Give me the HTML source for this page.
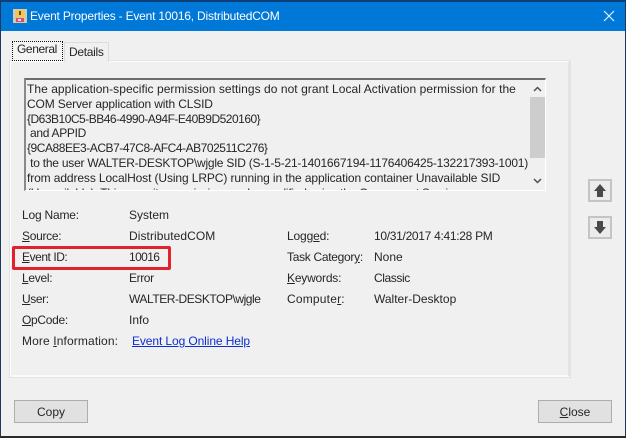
<!DOCTYPE html>
<html>
<head>
<meta charset="utf-8">
<style>
html,body{margin:0;padding:0;}
body{width:626px;height:438px;position:relative;overflow:hidden;background:#f0f0f0;font-family:"Liberation Sans",sans-serif;font-size:12px;color:#262626;}
.a{position:absolute;white-space:pre;line-height:15px;}
.b{position:absolute;box-sizing:border-box;}
u{text-decoration:underline;}
.btn{position:absolute;box-sizing:border-box;background:#e1e1e1;border:1px solid #adadad;text-align:center;line-height:22px;}
.s{background:#ececec;border:2px solid #c4c4c4;}
</style>
</head>
<body>
<div class="b" style="left:0;top:0;width:626px;height:31px;background:#0078d7;border-top:2px solid #0a3f78;"></div>
<div class="b" style="left:0;top:0;width:1px;height:438px;background:#1c3a5c;"></div>
<div class="b" style="left:625px;top:0;width:1px;height:438px;background:#1c3a5c;"></div>
<div class="b" style="left:0;top:436px;width:626px;height:2px;background:#2a2a2a;"></div>

<svg class="b" style="left:12px;top:8px;" width="16" height="16" viewBox="0 0 16 16">
<rect x="1" y="1" width="14" height="14" fill="#d8c9a8"/>
<rect x="4" y="2" width="8" height="7" fill="#f2c94c"/>
<rect x="7" y="3" width="2" height="4" fill="#7a3b1e"/>
<rect x="4" y="10" width="8" height="4" fill="#d8506a"/>
<rect x="6" y="11" width="3" height="2" fill="#f3e8e8"/>
</svg>
<div class="a" style="left:30px;top:9px;color:#fff;font-size:12px;letter-spacing:-.2px;">Event Properties - Event 10016, DistributedCOM</div>
<svg class="b" style="left:603px;top:10px;" width="12" height="12" viewBox="0 0 12 12"><path d="M1 1L11 11M11 1L1 11" stroke="#e8f2fb" stroke-width="1.2" fill="none"/></svg>

<!-- tab panel -->
<div class="b" style="left:10px;top:61px;width:560px;height:316px;border:1px solid #fff;border-right:2px solid #e4e4e4;border-bottom:2px solid #fafafa;box-shadow:0 0 0 1px #e2e2e2;"></div>
<div class="b" style="left:64px;top:42px;width:45px;height:20px;background:#f0f0f0;border:1px solid #dcdcdc;border-bottom:none;"></div>
<div class="a" style="left:69px;top:45px;letter-spacing:-.3px;">Details</div>
<div class="b" style="left:12px;top:41px;width:51px;height:20px;background:#f4f4f4;border:1px dotted #111;"></div>
<div class="a" style="left:17px;top:42px;letter-spacing:-.4px;">General</div>

<!-- text box -->
<div class="b" style="left:24px;top:78px;width:522px;height:113px;overflow:hidden;background:#f0f0f0;border-top:2px solid #6d6d6d;border-left:2px solid #8a8a8a;border-right:1px solid #fff;border-bottom:1px solid #fff;">
<div class="a" style="left:1px;top:2px;letter-spacing:.05px;">The application-specific permission settings do not grant Local Activation permission for the</div>
<div class="a" style="left:1px;top:17px;letter-spacing:-.15px;">COM Server application with CLSID</div>
<div class="a" style="left:1px;top:32px;letter-spacing:-.5px;">{D63B10C5-BB46-4990-A94F-E40B9D520160}</div>
<div class="a" style="left:1px;top:46px;letter-spacing:-.3px;"> and APPID</div>
<div class="a" style="left:1px;top:61px;letter-spacing:-.46px;">{9CA88EE3-ACB7-47C8-AFC4-AB702511C276}</div>
<div class="a" style="left:1px;top:76px;letter-spacing:-.23px;"> to the user WALTER-DESKTOP\wjgle SID (S-1-5-21-1401667194-1176406425-132217393-1001)</div>
<div class="a" style="left:1px;top:91px;letter-spacing:-.11px;">from address LocalHost (Using LRPC) running in the application container Unavailable SID</div>
<div class="a" style="left:1px;top:106px;letter-spacing:-.26px;">(Unavailable). This security permission can be modified using the Component Services</div>
<div class="b" style="left:504px;top:0;width:16px;height:112px;background:#f0f0f0;"></div>
<div class="b" style="left:504px;top:17px;width:15px;height:61px;background:#cdcdcd;"></div>
<svg class="b" style="left:507px;top:6px;" width="9" height="6" viewBox="0 0 9 6"><path d="M1 5L4.5 1.5L8 5" stroke="#505050" stroke-width="1.5" fill="none"/></svg>
<svg class="b" style="left:507px;top:98px;" width="9" height="6" viewBox="0 0 9 6"><path d="M1 1L4.5 4.5L8 1" stroke="#505050" stroke-width="1.5" fill="none"/></svg>
</div>

<!-- fields -->
<div class="a" style="left:22px;top:208px;letter-spacing:-.2px;">Log Name:</div><div class="a" style="left:129px;top:208px;">System</div>
<div class="a" style="left:22px;top:229px;letter-spacing:-.3px;"><u>S</u>ource:</div><div class="a" style="left:129px;top:229px;letter-spacing:.07px;">DistributedCOM</div>
<div class="a" style="left:22px;top:250px;letter-spacing:-.45px;"><u>E</u>vent ID:</div><div class="a" style="left:129px;top:250px;letter-spacing:-.6px;">10016</div>
<div class="a" style="left:22px;top:271px;letter-spacing:-.3px;"><u>L</u>evel:</div><div class="a" style="left:129px;top:271px;letter-spacing:-.4px;">Error</div>
<div class="a" style="left:22px;top:292px;letter-spacing:-.4px;"><u>U</u>ser:</div><div class="a" style="left:129px;top:292px;letter-spacing:-.45px;">WALTER-DESKTOP\wjgle</div>
<div class="a" style="left:22px;top:313px;letter-spacing:-.3px;"><u>O</u>pCode:</div><div class="a" style="left:129px;top:313px;">Info</div>
<div class="a" style="left:22px;top:334px;letter-spacing:.12px;">More <u>I</u>nformation:</div><div class="a" style="left:132px;top:334px;color:#0b2fd0;text-decoration:underline;letter-spacing:-.1px;">Event Log Online Help</div>

<div class="a" style="left:287px;top:229px;letter-spacing:-.15px;">Logg<u>e</u>d:</div><div class="a" style="left:374px;top:229px;letter-spacing:-.3px;">10/31/2017 4:41:28 PM</div>
<div class="a" style="left:287px;top:250px;letter-spacing:-.3px;">Task Categor<u>y</u>:</div><div class="a" style="left:374px;top:250px;">None</div>
<div class="a" style="left:287px;top:271px;letter-spacing:-.2px;"><u>K</u>eywords:</div><div class="a" style="left:374px;top:271px;letter-spacing:-.4px;">Classic</div>
<div class="a" style="left:287px;top:292px;letter-spacing:.2px;">Compute<u>r</u>:</div><div class="a" style="left:374px;top:292px;">Walter-Desktop</div>

<!-- red highlight -->
<div class="b" style="left:12px;top:246px;width:159px;height:24px;border:3px solid #e0222f;border-radius:2px;"></div>

<!-- side buttons -->
<div class="b s" style="left:588px;top:179px;width:24px;height:23px;"></div>
<svg class="b" style="left:593px;top:183px;" width="14" height="15" viewBox="0 0 14 15"><path d="M7 1L13 8H10V14H4V8H1Z" fill="#4a4a4a"/></svg>
<div class="b s" style="left:588px;top:216px;width:24px;height:23px;"></div>
<svg class="b" style="left:593px;top:220px;" width="14" height="15" viewBox="0 0 14 15"><path d="M7 14L13 7H10V1H4V7H1Z" fill="#4a4a4a"/></svg>

<!-- bottom buttons -->
<div class="btn" style="left:14px;top:400px;width:74px;height:23px;">Copy</div>
<div class="btn" style="left:538px;top:400px;width:74px;height:23px;"><u>C</u>lose</div>
</body>
</html>
